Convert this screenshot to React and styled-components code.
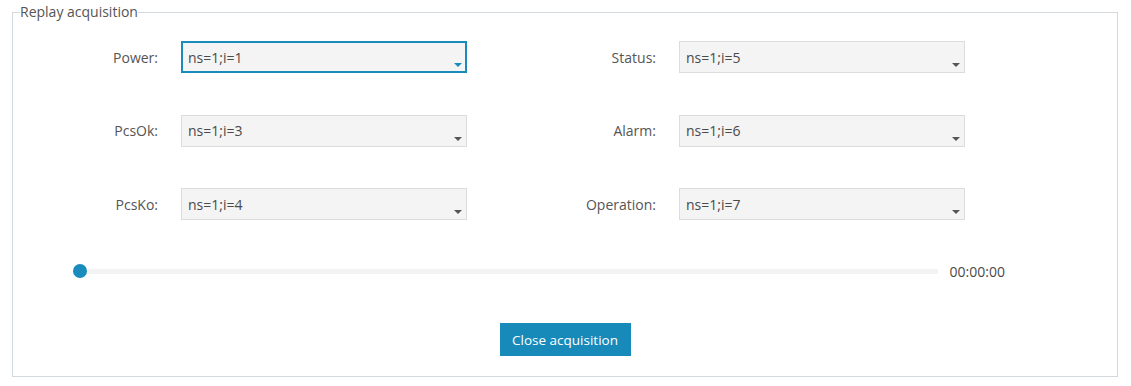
import React, { useState } from 'react'
import styled, { createGlobalStyle } from 'styled-components'

const GlobalStyle = createGlobalStyle`
  html, body {
    margin: 0;
    padding: 0;
    background: #ffffff;
    font-family: 'Open Sans', 'Noto Sans', sans-serif;
    font-size: 14px;
    color: #4d4d4d;
  }
`

const Page = styled.div`
  padding: 3px 13px 0 12px;
`

const Panel = styled.fieldset`
  margin: 0;
  padding: 20px 0 20px 0;
  border: 1px solid #d3d8dc;
  min-width: 0;
`

const Legend = styled.legend`
  margin-left: 7px;
  padding: 0;
  font-size: 14px;
  line-height: 18px;
  color: #555555;
`

const Fields = styled.div`
  display: grid;
  grid-template-columns: 120px 286px 166px 286px;
  column-gap: 23px;
  row-gap: 41.5px;
  padding-left: 25px;
`

const Label = styled.label`
  display: flex;
  align-items: center;
  justify-content: flex-end;
  height: 32px;
  color: #555555;
`

const SelectBox = styled.div`
  box-sizing: border-box;
  height: 32px;
  display: flex;
  align-items: stretch;
  justify-content: space-between;
  background: #f4f4f4;
  border: ${(p) => (p.focused ? '2px solid #1a8bbd' : '1px solid #dcdcdc')};
  padding: ${(p) => (p.focused ? '0 3px 0 5px' : '0 4px 0 6px')};
  cursor: pointer;
`

const Value = styled.span`
  display: flex;
  align-items: center;
  color: #4a4a4a;
`

const Caret = styled.span`
  align-self: flex-end;
  margin-bottom: ${(p) => (p.focused ? '4px' : '5px')};
  width: 0;
  height: 0;
  border-left: 4px solid transparent;
  border-right: 4px solid transparent;
  border-top: 4px solid ${(p) => (p.focused ? '#1a8bbd' : '#555555')};
`

const SliderRow = styled.div`
  display: flex;
  align-items: center;
  margin-top: 41px;
  padding-left: 60px;
  padding-right: 112px;
  gap: 12px;
`

const Track = styled.div`
  flex: 1;
  height: 5px;
  background: #f3f3f3;
  display: flex;
  align-items: center;
`

const Thumb = styled.span`
  width: 14px;
  height: 14px;
  border-radius: 50%;
  background: #1a8bbd;
  flex-shrink: 0;
`

const Time = styled.span`
  color: #4a4a4a;
  line-height: 18px;
  padding-top: 2px;
`

const Actions = styled.div`
  display: flex;
  justify-content: center;
  margin-top: 42px;
`

const Button = styled.button`
  height: 33px;
  width: 131px;
  padding: 0;
  border: none;
  background: #188ab9;
  color: #ffffff;
  font-family: 'Open Sans', 'Noto Sans', sans-serif;
  font-size: 13.5px;
  cursor: pointer;
`

const fields = [
  ['Power', 'ns=1;i=1', 'Status', 'ns=1;i=5'],
  ['PcsOk', 'ns=1;i=3', 'Alarm', 'ns=1;i=6'],
  ['PcsKo', 'ns=1;i=4', 'Operation', 'ns=1;i=7'],
]

function Select({ value, focused }) {
  return (
    <SelectBox focused={focused}>
      <Value>{value}</Value>
      <Caret focused={focused} />
    </SelectBox>
  )
}

export default function App() {
  const [focus] = useState('Power')
  return (
    <>
      <GlobalStyle />
      <Page>
        <Panel>
          <Legend>Replay acquisition</Legend>
          <Fields>
            {fields.map(([l1, v1, l2, v2]) => (
              <React.Fragment key={l1}>
                <Label>{l1}:</Label>
                <Select value={v1} focused={focus === l1} />
                <Label>{l2}:</Label>
                <Select value={v2} focused={focus === l2} />
              </React.Fragment>
            ))}
          </Fields>
          <SliderRow>
            <Track>
              <Thumb />
            </Track>
            <Time>00:00:00</Time>
          </SliderRow>
          <Actions>
            <Button>Close acquisition</Button>
          </Actions>
        </Panel>
      </Page>
    </>
  )
}
